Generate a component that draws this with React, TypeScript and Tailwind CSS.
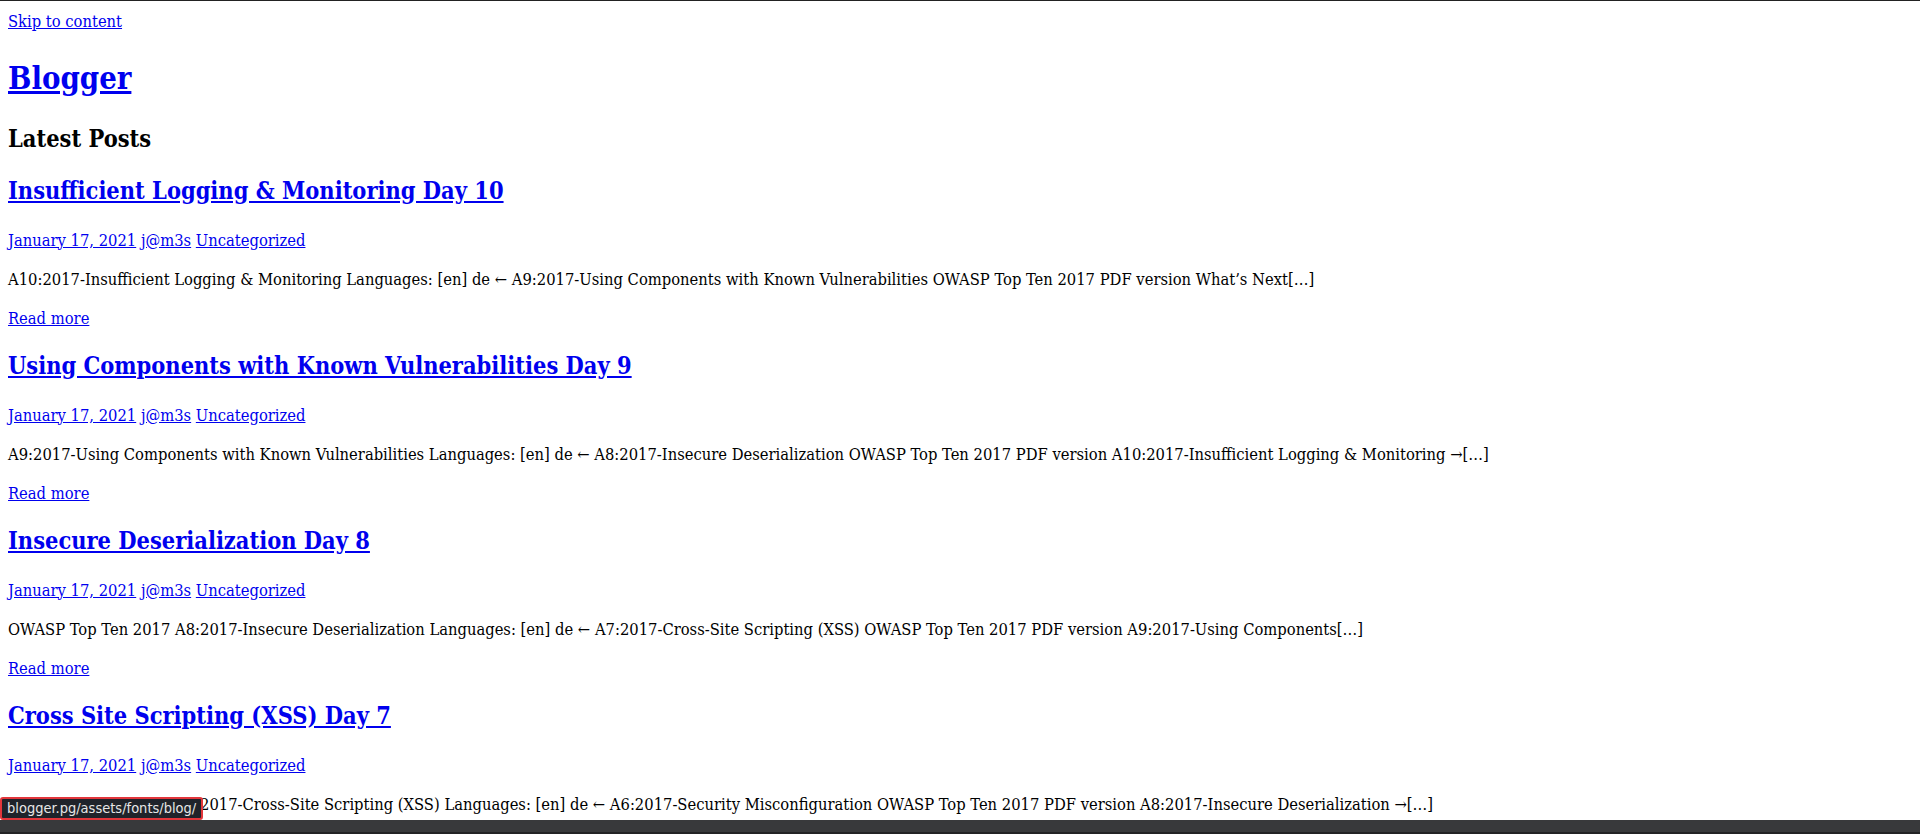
import React from "react";

type Post = { title: string; excerpt: string };

const posts: Post[] = [
  {
    title: "Insufficient Logging & Monitoring Day 10",
    excerpt:
      "A10:2017-Insufficient Logging & Monitoring Languages: [en] de \u2190 A9:2017-Using Components with Known Vulnerabilities OWASP Top Ten 2017 PDF version What\u2019s Next[\u2026]",
  },
  {
    title: "Using Components with Known Vulnerabilities Day 9",
    excerpt:
      "A9:2017-Using Components with Known Vulnerabilities Languages: [en] de \u2190 A8:2017-Insecure Deserialization OWASP Top Ten 2017 PDF version A10:2017-Insufficient Logging & Monitoring \u2192[\u2026]",
  },
  {
    title: "Insecure Deserialization Day 8",
    excerpt:
      "OWASP Top Ten 2017 A8:2017-Insecure Deserialization Languages: [en] de \u2190 A7:2017-Cross-Site Scripting (XSS) OWASP Top Ten 2017 PDF version A9:2017-Using Components[\u2026]",
  },
  {
    title: "Cross Site Scripting (XSS) Day 7",
    excerpt:
      "OWASP Top Ten 2017 A7:2017-Cross-Site Scripting (XSS) Languages: [en] de \u2190 A6:2017-Security Misconfiguration OWASP Top Ten 2017 PDF version A8:2017-Insecure Deserialization \u2192[\u2026]",
  },
];

const link = "text-[#0000ee] underline";

const PostItem = ({ post }: { post: Post }) => {
  return (
    <article>
      <h2 className="text-[23.4px] font-bold leading-[32px] mt-[20px] mb-[22px]">
        <a href="#" className={link}>
          {post.title}
        </a>
      </h2>
      <div className="leading-[23px] my-4">
        <a href="#" className={link}>
          January 17, 2021
        </a>{" "}
        <a href="#" className={link}>
          j@m3s
        </a>{" "}
        <a href="#" className={link}>
          Uncategorized
        </a>
      </div>
      <p className="leading-[23px] my-4">{post.excerpt}</p>
      <p className="leading-[23px] my-4">
        <a href="#" className={link}>
          Read more
        </a>
      </p>
    </article>
  );
};

export default function App() {
  return (
    <div className="min-h-screen bg-white text-black text-[16.4px] border-t border-[#222] font-['DejaVu_Serif_Condensed','DejaVu_Serif',serif] [font-stretch:semi-condensed]">
      <div className="px-2 pt-[9px] pb-2">
        <a href="#" className={link + " leading-[22px]"}>
          Skip to content
        </a>
        <header>
          <h1 className="text-[30.8px] font-bold leading-[44px] mt-[21px] mb-[23px]">
            <a href="#" className={link}>
              Blogger
            </a>
          </h1>
        </header>
        <main>
          <h2 className="text-[23.4px] font-bold leading-[32px] my-[20px]">Latest Posts</h2>
          {posts.map((p) => (
            <PostItem key={p.title} post={p} />
          ))}
        </main>
      </div>

      <div className="fixed bottom-[14px] left-0 rounded-[3px] border-2 border-[#e2363b] bg-[#1f232a] px-[5px] h-[23px] flex items-center text-[14.5px] text-[#e6e6e6] font-['DejaVu_Sans',sans-serif]">
        blogger.pg/assets/fonts/blog/
      </div>
      <div className="fixed bottom-0 left-0 right-0 h-[14px] bg-[#38393b] border-b-2 border-[#232325]" />
    </div>
  );
}
